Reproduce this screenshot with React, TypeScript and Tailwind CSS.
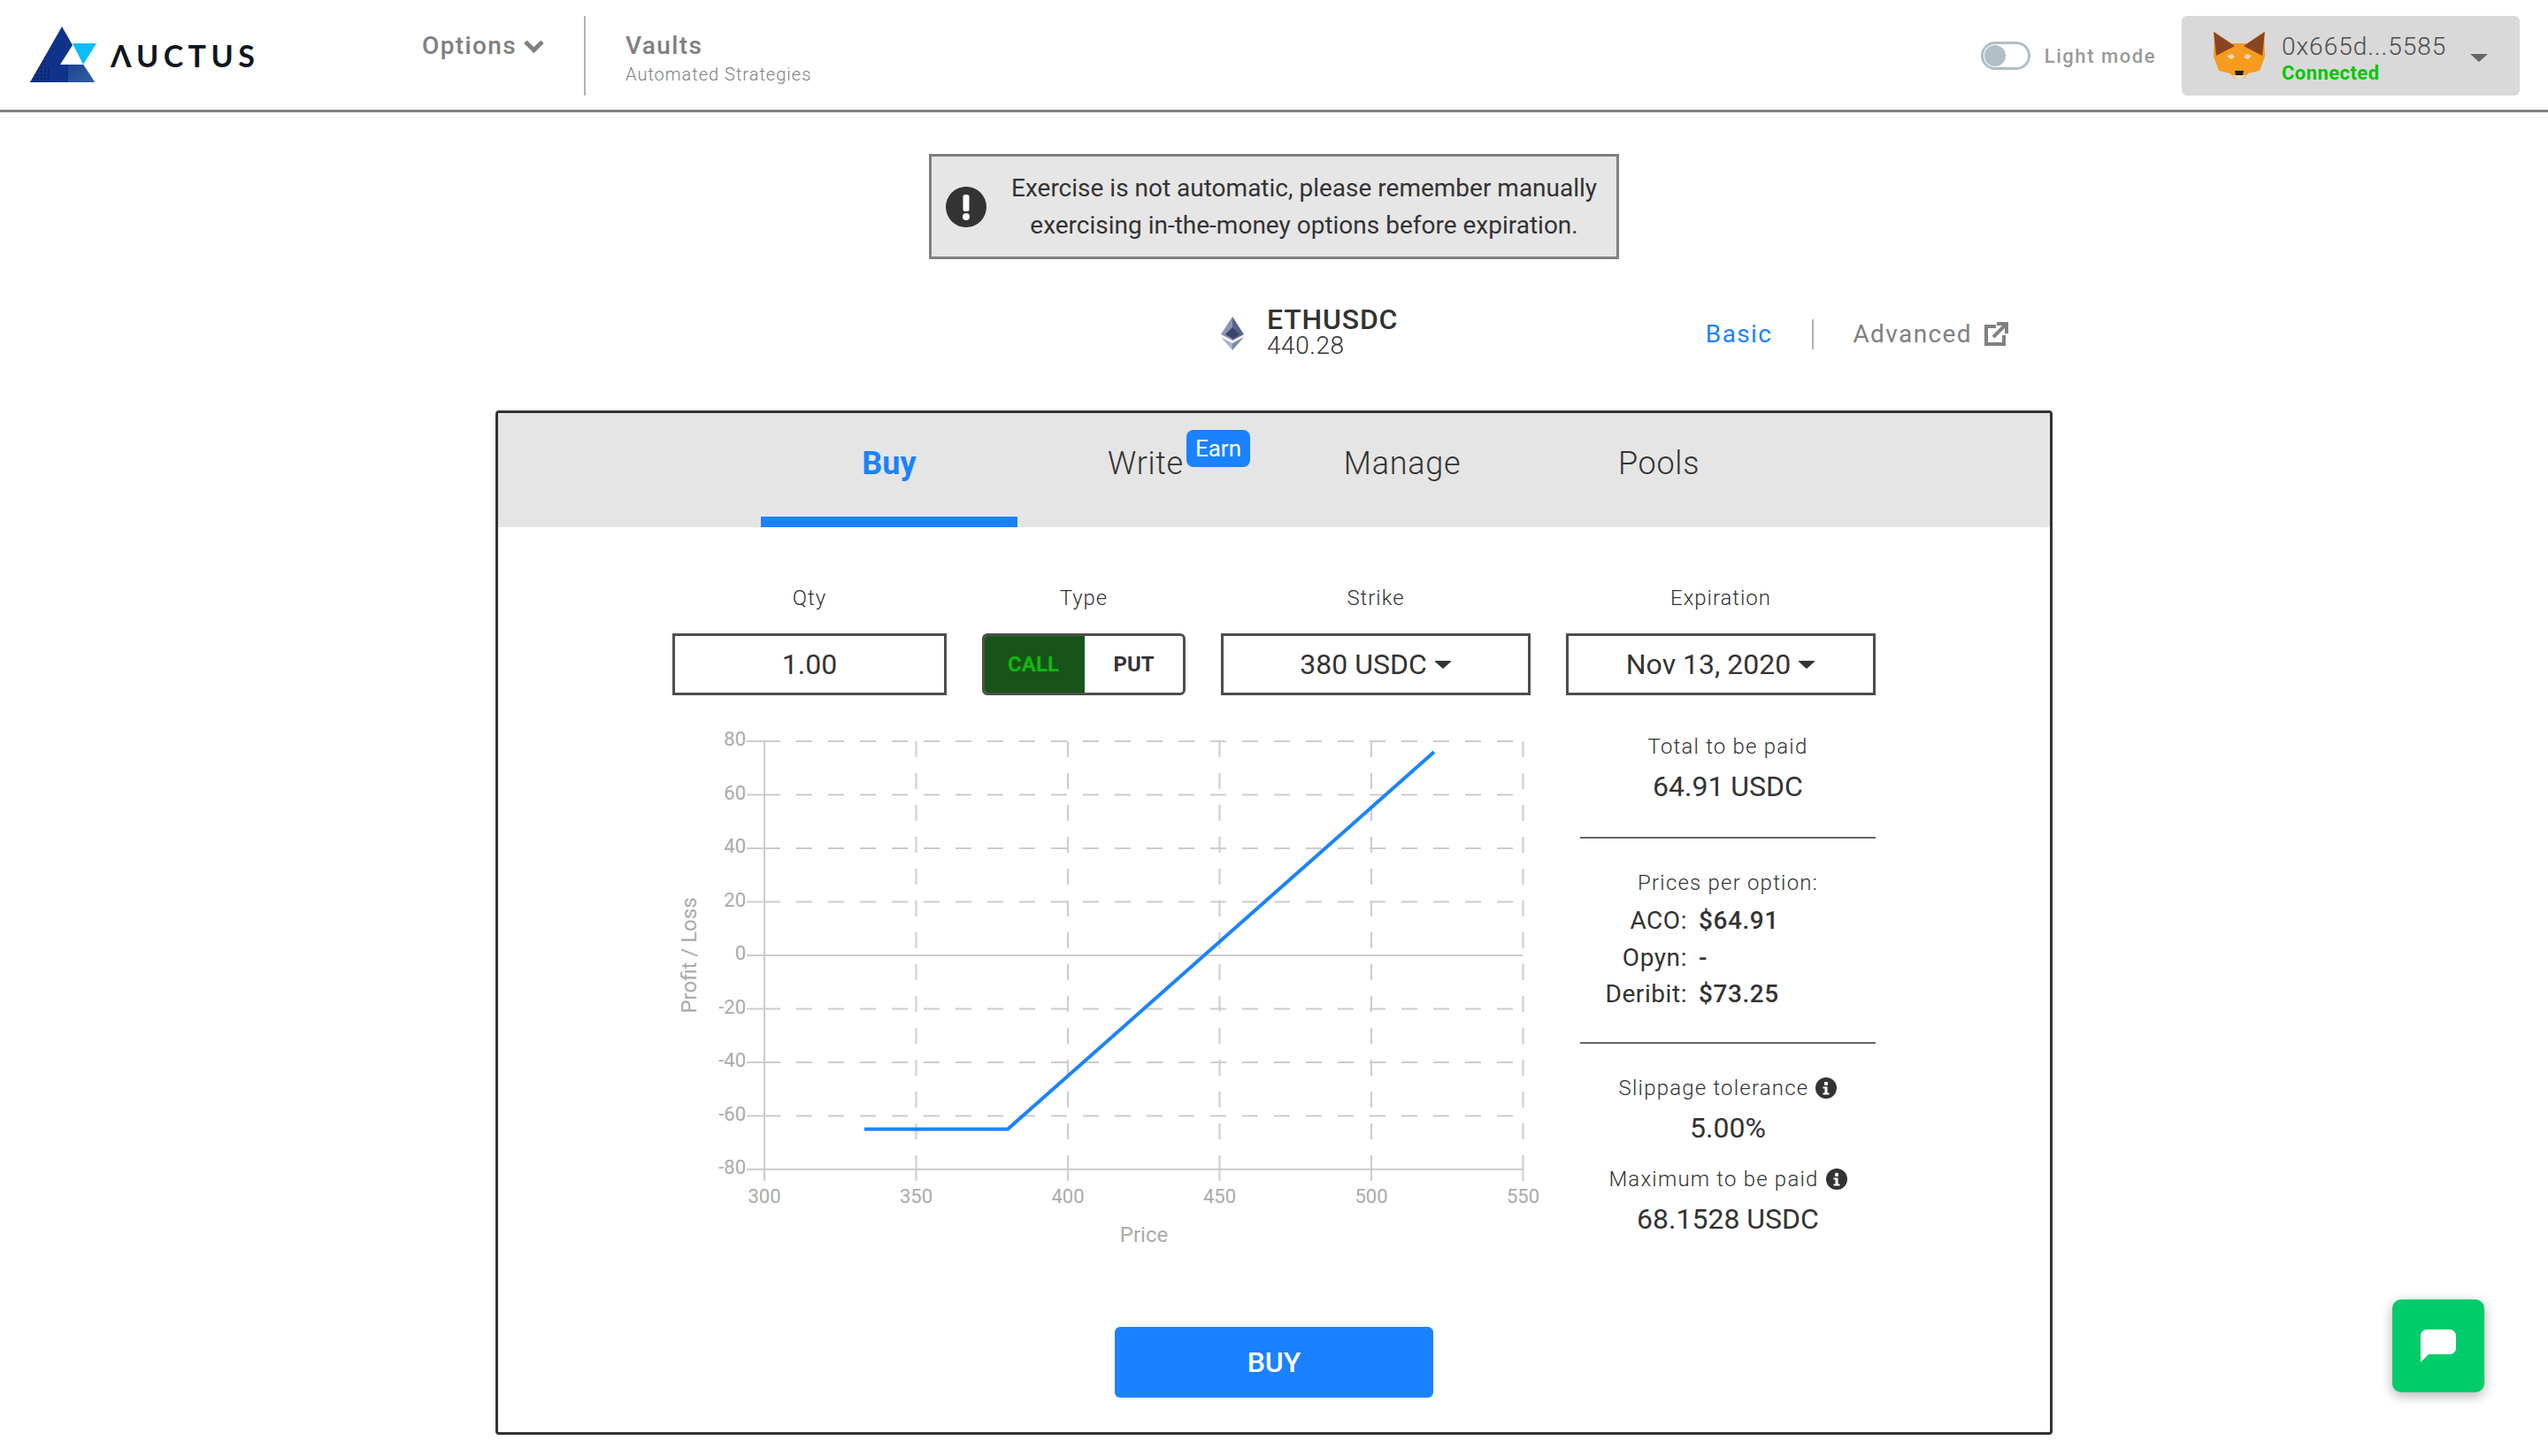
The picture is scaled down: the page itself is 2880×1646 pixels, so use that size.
const yTicks = [80, 60, 40, 20, 0, -20, -40, -60, -80];
const xTicks = [300, 350, 400, 450, 500, 550];

const yPos = (v: number) => 1080 - v * 3.025;
const xPos = (v: number) => 864 + (v - 300) * 3.43;

const Caret = () => (
  <svg width="20" height="9" viewBox="0 0 20 9" className="ml-[8px] inline-block">
    <path d="M1 0.5h18L10 8.5z" fill="#333" stroke="#333" strokeLinejoin="round" />
  </svg>
);

const InfoDot = () => (
  <svg width="24" height="24" viewBox="0 0 24 24" className="ml-[8px] inline-block">
    <circle cx="12" cy="12" r="12" fill="#333" />
    <rect x="10" y="5" width="4" height="4" rx="1" fill="#fff" />
    <path d="M8.5 10.5h5v7h2v2h-7v-2h2v-5h-2z" fill="#fff" />
  </svg>
);

const Logo = () => (
  <svg width="80" height="66" viewBox="30 28 80 66" className="mb-[4px] shrink-0">
    <defs>
      <linearGradient id="lower" x1="0" x2="1" y1="0" y2="1">
        <stop offset="0" stopColor="#1c4593" />
        <stop offset="1" stopColor="#33609f" />
      </linearGradient>
      <pattern id="dots" width="4" height="4" patternUnits="userSpaceOnUse">
        <rect width="1.6" height="1.6" fill="#061a4a" />
      </pattern>
    </defs>
    <path d="M68 30L32 93h73L92 73H66L80 51z" fill="#10338a" />
    <path d="M75 73h17l13 20H75z" fill="url(#lower)" />
    <path d="M50 62L32 93h24z" fill="url(#dots)" />
    <path d="M80 49h27L92 73z" fill="#0bbcff" />
  </svg>
);

const Fox = () => (
  <svg width="58" height="54" viewBox="0 0 58 54">
    <path d="M1 0l19 13h18L57 0l1 28-6 16-13 3-5 6H24l-5-6-13-3-6-16z" fill="#f69a20" />
    <path d="M0 0l24 16L3 27z" fill="#8a4520" />
    <path d="M58 0L34 16l21 11z" fill="#8a4520" />
    <path d="M15 27l6-2 3 4-5 2z" fill="#f3d9b0" />
    <path d="M43 27l-6-2-3 4 5 2z" fill="#f3d9b0" />
    <path d="M24 44h10l-1 5h-8z" fill="#1d1d1d" />
    <path d="M21 49h16l-4 4h-8z" fill="#e8d8c0" />
  </svg>
);

const Chart = () => (
  <svg width="1000" height="600" viewBox="760 820 1000 600" className="shrink-0">
    {yTicks.map((v) => (
      <g key={v}>
        <line x1={864} x2={1721} y1={yPos(v)} y2={yPos(v)} stroke="#ccc" strokeWidth="2" strokeDasharray="18 18" />
        <line x1={844} x2={864} y1={yPos(v)} y2={yPos(v)} stroke="#ccc" strokeWidth="2" />
        <text x={843} y={yPos(v) + 5} textAnchor="end" fontSize="22" fill="#aaa">{v}</text>
      </g>
    ))}
    {xTicks.map((v) => (
      <g key={v}>
        <line x1={xPos(v)} x2={xPos(v)} y1={838} y2={1322} stroke="#ccc" strokeWidth="2" strokeDasharray="18 18" />
        <line x1={xPos(v)} x2={xPos(v)} y1={1322} y2={1335} stroke="#ccc" strokeWidth="2" />
        <text x={xPos(v)} y={1360} textAnchor="middle" fontSize="22" fill="#aaa">{v}</text>
      </g>
    ))}
    <line x1={864} x2={1721} y1={1080} y2={1080} stroke="#ccc" strokeWidth="2" />
    <line x1={864} x2={864} y1={838} y2={1322} stroke="#ccc" strokeWidth="2" />
    <line x1={864} x2={1721} y1={1322} y2={1322} stroke="#ccc" strokeWidth="2" />
    <polyline points="977,1276.5 1139,1276.5 1621,850" fill="none" stroke="#1a82ff" strokeWidth="4" />
    <text x={1293} y={1404} textAnchor="middle" fontSize="24" fill="#aaa">Price</text>
    <text x={787} y={1080} textAnchor="middle" fontSize="24" fill="#aaa" transform="rotate(-90 787 1080)">Profit / Loss</text>
  </svg>
);

const App = () => {
  return (
    <div className="relative h-[1646px] w-full overflow-hidden bg-white font-['Roboto',sans-serif] text-[#333]">
      {/* header */}
      <header className="flex h-[127px] items-center border-b-[3px] border-[#808080] pl-[32px] pr-[32px] pt-[2px]">
        <Logo />
        <div className="ml-[13px] w-[170px] font-['Lato',sans-serif] text-[34px] font-bold leading-none tracking-[0.16em] text-[#0d1720]">ΛUCTUS</div>
        <div className="mb-[22px] ml-[182px] flex w-[139px] items-center text-[28px] font-medium tracking-[0.05em] text-[#808080]">
          Options
          <svg width="26" height="16" viewBox="0 0 26 16" className="ml-[7px]">
            <path d="M3 3l10 10L23 3" fill="none" stroke="#808080" strokeWidth="5" />
          </svg>
        </div>
        <div className="ml-[44px] h-[90px] w-[2px] bg-[#b3b3b3]" />
        <div className="ml-[45px] mt-[7px] flex flex-col">
          <span className="text-[28px] font-medium leading-[32px] tracking-[0.05em] text-[#808080]">Vaults</span>
          <span className="mt-[3px] text-[20px] font-light leading-[26px] tracking-[0.05em] text-[#808080]">Automated Strategies</span>
        </div>
        <div className="ml-auto flex items-center">
          <div className="flex h-[32px] w-[56px] items-center rounded-full border-[3px] border-[#b0bec5] pl-[1px]">
            <div className="h-[24px] w-[24px] rounded-full bg-[#b0bec5]" />
          </div>
          <span className="ml-[16px] text-[22px] font-medium tracking-[0.07em] text-[#999]">Light mode</span>
          <div className="ml-[29px] flex h-[90px] w-[382px] items-center rounded-[6px] bg-[#d9d9d9] pl-[36px]">
            <Fox />
            <div className="ml-[19px] mt-[5px] flex flex-col">
              <span className="text-[28px] font-light leading-[34px] tracking-[0.035em] text-[#4d4d4d]">0x665d...5585</span>
              <span className="text-[22px] font-bold leading-[26px] tracking-[0.02em] text-[#00c800]">Connected</span>
            </div>
            <svg width="20" height="9" viewBox="0 0 20 9" className="ml-auto mr-[36px] mt-[4px]">
              <path d="M0 0h20L10 9z" fill="#666" />
            </svg>
          </div>
        </div>
      </header>

      <main className="flex flex-col items-center">
        {/* notice */}
        <div className="mt-[47px] flex h-[119px] w-[780px] items-center border-[3px] border-[#808080] bg-[#e6e6e6] pl-[16px]">
          <svg width="46" height="46" viewBox="0 0 46 46" className="shrink-0">
            <circle cx="23" cy="23" r="23" fill="#333" />
            <rect x="19.5" y="9" width="7" height="19" rx="2.5" fill="#fff" />
            <circle cx="23" cy="34" r="4" fill="#fff" />
          </svg>
          <p className="ml-[28px] w-[662px] whitespace-nowrap text-center text-[28px] leading-[42px] text-[#333]">
            Exercise is not automatic, please remember manually
            <br />
            exercising in-the-money options before expiration.
          </p>
        </div>

        {/* pair + mode */}
        <div className="mt-[47px] flex h-[65px] w-[1760px] items-center justify-between pl-[820px] pr-[50px]">
          <div className="mt-[2px] flex items-center">
            <svg width="26" height="38" viewBox="0 0 26 38" className="mt-[6px]">
              <path d="M13 0L0 20l13 7z" fill="#8a94b8" />
              <path d="M13 0l13 20-13 7z" fill="#5a648c" />
              <path d="M0 23l13 15V30z" fill="#a6b2c8" />
              <path d="M26 23L13 38V30z" fill="#7b8aa8" />
              <path d="M13 12l-8 8 8 5 8-5z" fill="#3c4468" />
            </svg>
            <div className="ml-[26px] flex flex-col">
              <span className="text-[32px] font-medium leading-[34px] tracking-[0.025em] text-[#333]">ETHUSDC</span>
              <span className="text-[28px] font-light leading-[26px] tracking-[0.02em] text-[#333]">440.28</span>
            </div>
          </div>
          <div className="mt-[10px] flex items-center text-[28px] tracking-[0.05em]">
            <span className="text-[#1a82ff]">Basic</span>
            <div className="ml-[45px] h-[34px] w-[2px] bg-[#b3b3b3]" />
            <span className="ml-[44px] font-normal text-[#808080]">Advanced</span>
            <svg width="28" height="28" viewBox="0 0 28 28" className="ml-[13px]">
              <path d="M14 5H3v20h20V15" fill="none" stroke="#808080" strokeWidth="4" />
              <path d="M11 17L25 3M15 2h11v11" fill="none" stroke="#808080" strokeWidth="4" />
            </svg>
          </div>
        </div>

        {/* trade card */}
        <div className="mt-[59px] h-[1158px] w-[1760px] rounded-[4px] border-[3px] border-[#333]">
          <nav className="flex h-[129px] justify-center bg-[#e5e5e5]">
            <div className="flex h-full w-[290px] items-center justify-center border-b-[12px] border-[#1a82ff] pb-[3px] text-[36px] font-bold text-[#1a82ff]">Buy</div>
            <div className="relative flex h-full w-[290px] items-center justify-center border-b-[12px] border-transparent pb-[3px] text-[36px] font-light tracking-[0.02em]">
              Write
              <span className="absolute left-[191px] top-[19px] flex h-[42px] w-[72px] items-center justify-center rounded-[8px] bg-[#1a82ff] text-[26px] font-normal tracking-normal text-white">Earn</span>
            </div>
            <div className="flex h-full w-[290px] items-center justify-center border-b-[12px] border-transparent pb-[3px] text-[36px] font-light tracking-[0.02em]">Manage</div>
            <div className="flex h-full w-[290px] items-center justify-center border-b-[12px] border-transparent pb-[3px] text-[36px] font-light tracking-[0.02em]">Pools</div>
          </nav>

          <div className="mx-auto w-[1360px] pt-[63px]">
            {/* form */}
            <div className="flex gap-x-[40px]">
              <div className="w-[310px]">
                <div className="text-center text-[24px] font-light leading-[34px] tracking-[0.04em]">Qty</div>
                <div className="mt-[23px] flex h-[70px] items-center justify-center border-[3px] border-[#4d4d4d] text-[32px]">1.00</div>
              </div>
              <div className="w-[230px]">
                <div className="text-center text-[24px] font-light leading-[34px] tracking-[0.04em]">Type</div>
                <div className="mt-[23px] flex h-[70px] overflow-hidden rounded-[6px] border-[3px] border-[#4d4d4d]">
                  <div className="-m-[3px] flex w-[116px] items-center justify-center bg-[#18541a] text-[24px] font-bold text-[#11b811]">CALL</div>
                  <div className="ml-[3px] flex flex-1 items-center justify-center text-[24px] font-bold">PUT</div>
                </div>
              </div>
              <div className="w-[350px]">
                <div className="text-center text-[24px] font-light leading-[34px] tracking-[0.04em]">Strike</div>
                <div className="mt-[23px] flex h-[70px] items-center justify-center border-[3px] border-[#4d4d4d] text-[32px]">380 USDC<Caret /></div>
              </div>
              <div className="w-[350px]">
                <div className="text-center text-[24px] font-light leading-[34px] tracking-[0.04em]">Expiration</div>
                <div className="mt-[23px] flex h-[70px] items-center justify-center border-[3px] border-[#4d4d4d] text-[32px]">Nov 13, 2020<Caret /></div>
              </div>
            </div>

            {/* chart + summary */}
            <div className="mt-[34px] flex">
              <Chart />
              <div className="ml-[26px] w-[334px] pt-[7px] text-center">
                <div className="text-[24px] font-light leading-[34px] tracking-[0.05em]">Total to be paid</div>
                <div className="mt-[8px] text-[32px] leading-[40px]">64.91 USDC</div>
                <div className="mt-[37px] h-[2px] bg-[#666]" />
                <div className="mt-[33px] text-[24px] font-light leading-[34px] tracking-[0.05em]">Prices per option:</div>
                <div className="mt-[5px] grid grid-cols-[121px_1fr] gap-x-[13px] text-left text-[28px] leading-[41.5px] tracking-[0.02em]">
                  <span className="text-right">ACO:</span><span className="font-medium">$64.91</span>
                  <span className="text-right">Opyn:</span><span className="font-medium">-</span>
                  <span className="text-right">Deribit:</span><span className="font-medium">$73.25</span>
                </div>
                <div className="mt-[33px] h-[2px] bg-[#666]" />
                <div className="mt-[33px] flex items-center justify-center text-[24px] font-light leading-[34px] tracking-[0.05em]">Slippage tolerance<InfoDot /></div>
                <div className="mt-[8px] text-[32px] leading-[40px]">5.00%</div>
                <div className="mt-[21px] flex items-center justify-center text-[24px] font-light leading-[34px] tracking-[0.05em]">Maximum to be paid<InfoDot /></div>
                <div className="mt-[8px] text-[32px] leading-[40px]">68.1528 USDC</div>
              </div>
            </div>

            <button className="mx-auto mt-[80px] flex h-[80px] w-[360px] items-center justify-center rounded-[6px] bg-[#1a82ff] text-[32px] font-medium text-white">BUY</button>
          </div>
        </div>
      </main>

      {/* chat widget */}
      <div className="absolute left-[2704px] top-[1469px] flex h-[105px] w-[104px] items-center justify-center rounded-[10px] bg-[#00cc6a] shadow-[0_4px_14px_rgba(0,0,0,0.3)]">
        <svg width="40" height="37" viewBox="0 0 40 37">
          <path d="M7 0h26a7 7 0 0 1 7 7v14a7 7 0 0 1-7 7H9l-9 9V7a7 7 0 0 1 7-7z" fill="#fff" />
        </svg>
      </div>
    </div>
  );
};

export default App;
